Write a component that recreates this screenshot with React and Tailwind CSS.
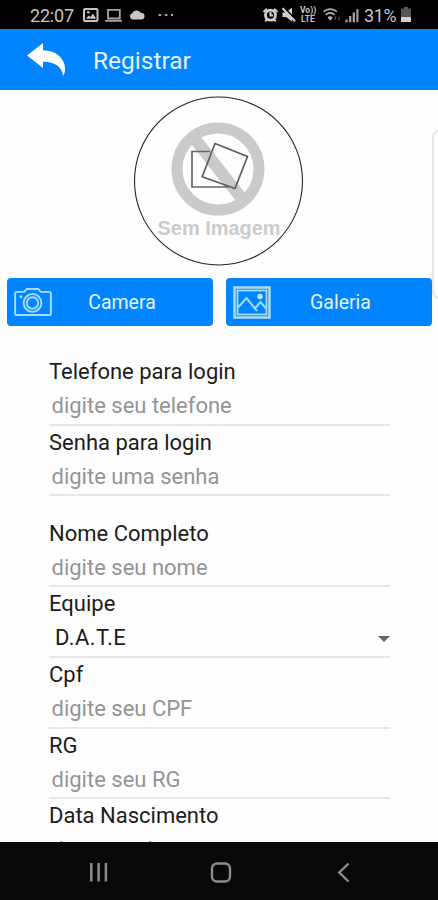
import React, { useState } from "react";

const StatusBar = () => (
  <div className="h-[29px] shrink-0 bg-black text-[#c6c6c6] flex items-center justify-between pl-[30px] pr-[27px]">
    <div className="flex items-center">
      <span className="w-[53px] pt-[2px] text-[18px] leading-none tracking-[-0.2px] whitespace-nowrap">22:07</span>
      {/* picture, laptop, cloud, more */}
      <svg className="w-[90px] h-[18px]" viewBox="83 6 90 18" fill="none">
        <rect x="84" y="9" width="13.5" height="12" rx="1" stroke="#c6c6c6" strokeWidth="2" />
        <path d="M86 18.8l2.5-3.3 2 1.5 2.5-3.5 3 5.3z" fill="#c6c6c6" />
        <circle cx="88.3" cy="12.3" r="1.3" fill="#c6c6c6" />
        <path d="M108 18.5V9.8h11.8v8.7zM105 20.8h17" stroke="#a5a5a5" strokeWidth="1.8" />
        <path d="M132.5 19.5a3.2 3.2 0 0 1-.3-6.2 4.7 4.7 0 0 1 8.4-.6 3.4 3.4 0 0 1 1 6.8z" fill="#c6c6c6" />
        <path d="M158.5 15h2.6M164.8 15h2.6M171 15h2" stroke="#a5a5a5" strokeWidth="2" />
      </svg>
    </div>
    <div className="flex items-center">
      {/* alarm, mute, VoLTE */}
      <svg className="w-[35px] h-[20px]" viewBox="260 5 35 20" fill="none">
        <circle cx="268.5" cy="15.2" r="5" stroke="#d0d0d0" strokeWidth="2.8" />
        <path d="M268.5 12v3.4h2.6M261.5 12l3.4-3.2M275.5 12l-3.4-3.2M265 19.3l-1.8 2M272 19.3l1.8 2" stroke="#d0d0d0" strokeWidth="2" />
        <path d="M280.5 12.5h3.5l6-5v14l-6-4.5h-3.5z" fill="#d0d0d0" />
        <path d="M281.5 7.2l12.5 13" stroke="#000" strokeWidth="2" />
        <path d="M280.5 8.2l12.5 13" stroke="#d0d0d0" strokeWidth="2.2" />
      </svg>
      <div className="w-[26px] pl-[3px] flex flex-col text-[8.5px] leading-[9px] font-bold">
        <span className="h-[9px]">Vo))</span>
        <span className="h-[9px] pl-px">LTE</span>
      </div>
      {/* wifi, signal */}
      <svg className="w-[38px] h-[20px] mr-[3px]" viewBox="321 5 38 20" fill="none">
        <path d="M321.5 11.6c4-3.4 9.4-3.4 13.4 0M323.8 14.8c2.8-2.3 6-2.3 8.8 0" stroke="#b5b5b5" strokeWidth="1.7" />
        <path d="M325.5 17.3c1.8-1.4 3.6-1.4 5.3 0l-2.6 3.5z" fill="#b5b5b5" />
        <path d="M333.5 16v4M337 16.5v4" stroke="#444" strokeWidth="1.5" />
        <path d="M344.6 19.5v2.7M348.2 16v6.2M351.8 12.5v9.7" stroke="#a5a5a5" strokeWidth="2.2" />
        <path d="M355.4 9v13.2" stroke="#999" strokeWidth="2.2" />
      </svg>
      <span className="w-[34px] pt-[2px] text-[18px] leading-none tracking-[-0.4px] whitespace-nowrap">31%</span>
      <svg className="w-[10px] h-[15px] ml-[3px]" viewBox="0 0 10 15">
        <path d="M3 0h4v1.6h3V15H0V1.6h3z" fill="#555" />
        <path d="M0 10h10v5H0z" fill="#d0d0d0" />
      </svg>
    </div>
  </div>
);

const Header = () => (
  <header className="h-[61px] shrink-0 bg-[#0084ff] flex items-center pl-[27px] gap-[27px]">
    <svg className="w-[39px] h-[34px]" viewBox="0 0 39 34" fill="#fff">
      <path d="M0 12.5L16 0v7.2c14 .2 22.8 9.500 22 19.300-.1 2.700-.9 5.100-2 6.500C35.300 24.200 27.700 18.600 16 18.800V25z" />
    </svg>
    <h1 className="pt-[3px] text-[24.5px] leading-none text-[#e6f4ff]">Registrar</h1>
  </header>
);

const NoImage = () => (
  <svg className="w-[172px] h-[172px] mx-auto block" viewBox="132.5 95 172 172" fill="none">
    <circle cx="218" cy="181" r="84" stroke="#222" strokeWidth="1.1" />
    <circle cx="217.5" cy="169" r="41" stroke="#cacaca" strokeWidth="11" />
    <path d="M194 138.5l48 61" stroke="#cacaca" strokeWidth="12" />
    <path d="M209.5 151.5H191.5V187H228" stroke="#666" strokeWidth="1.7" />
    <path d="M214.5 143.5l32.5 13-12.5 32-32.8-11.8z" stroke="#5c5c5c" strokeWidth="1.7" />
    <text x="157" y="234.5" fontSize="20" fontWeight="700" fill="#cbcbcb" textLength="123" lengthAdjust="spacingAndGlyphs" className="font-['Liberation_Sans',sans-serif]">
      Sem Imagem
    </text>
  </svg>
);

const CameraIcon = () => (
  <svg className="w-[38px] h-[29px]" viewBox="0 0 39 30" fill="none" stroke="#a8dcff" strokeWidth="2">
    <path d="M3 4h7.5l2.5-3h12l2.5 3H36a2 2 0 0 1 2 2v20a2 2 0 0 1-2 2H3a2 2 0 0 1-2-2V6a2 2 0 0 1 2-2z" />
    <circle cx="19" cy="15.5" r="9.2" />
    <circle cx="19" cy="15.5" r="5.9" />
    <circle cx="7" cy="9" r="1.5" fill="#b9e4ff" stroke="none" />
  </svg>
);

const GalleryIcon = () => (
  <svg className="w-[38px] h-[33px]" viewBox="0 0 38 33" fill="none" stroke="#a9dcee">
    <rect x="1.5" y="1.5" width="35" height="30" strokeWidth="2.5" />
    <rect x="4.5" y="4.5" width="29" height="24" strokeWidth="1.8" />
    <path d="M5 21.5l8.5-9.500 8.500 10.500 5.500-6.500 6 7M22 22.500l2 2.500" strokeWidth="2" />
    <circle cx="27" cy="10.5" r="2.8" fill="#b9e4f4" stroke="none" />
  </svg>
);

const PhotoButton = ({ icon, label }) => (
  <button className="w-[206px] h-[48px] rounded-[4px] bg-[#0084ff] text-[#e6f4ff] flex items-center pl-[7px]">
    <span className="w-[39px]">{icon}</span>
    <span className="w-[138px] pt-[2px] text-center text-[19.5px] leading-none">{label}</span>
  </button>
);

const Field = ({ label, placeholder, value, onChange }) => (
  <label className="block h-[70.7px] border-b-2 border-[#e7e7e7]">
    <span className="block h-[34px] text-[22px] leading-[34px] text-[#1c1c1c]">{label}</span>
    <input
      className="block w-full h-[34px] pl-[2.5px] text-[22px] leading-[34px] text-[#1c1c1c] placeholder:text-[#949494] outline-none"
      placeholder={placeholder}
      value={value}
      onChange={onChange}
    />
  </label>
);

const SelectField = ({ label, value }) => (
  <div className="h-[70.7px] border-b-2 border-[#e7e7e7]">
    <div className="h-[34px] text-[22px] leading-[34px] text-[#1c1c1c]">{label}</div>
    <div className="h-[34px] pl-[6px] flex items-center justify-between text-[22px] leading-[34px] text-[#1c1c1c]">
      <span className="tracking-[0.4px]">{value}</span>
      <svg className="w-[12px] h-[6px] mt-[2px]" viewBox="0 0 12 6">
        <path d="M0 0h12L6 6z" fill="#666" />
      </svg>
    </div>
  </div>
);

const NavBar = () => (
  <nav className="h-[58px] shrink-0 bg-[#080808]">
    <svg className="w-full h-full" viewBox="0 842 438 58" fill="none" stroke="#8c8c8c">
      <path d="M91.3 863v18.5M98.6 863v18.5M105.9 863v18.5" strokeWidth="2.5" />
      <rect x="212" y="863.5" width="18" height="18" rx="5" strokeWidth="2.4" />
      <path d="M348.5 863.5l-9.2 9 9.2 9" strokeWidth="2.4" />
    </svg>
  </nav>
);

const App = () => {
  const [form, setForm] = useState({ telefone: "", senha: "", nome: "", cpf: "", rg: "", nascimento: "" });

  const bind = (name) => ({
    value: form[name],
    onChange: (e) => setForm({ ...form, [name]: e.target.value }),
  });

  return (
    <div className="relative w-[438px] h-[900px] overflow-hidden flex flex-col bg-[#fefefe] font-[Roboto,sans-serif]">
      <StatusBar />
      <Header />

      <main className="flex-1 min-h-0 overflow-hidden pt-[5px]">
        <NoImage />

        <div className="mt-[11px] pl-[7px] flex gap-[12.5px]">
          <PhotoButton icon={<CameraIcon />} label="Camera" />
          <PhotoButton icon={<GalleryIcon />} label="Galeria" />
        </div>

        <form className="mt-[29px] ml-[49px] w-[341px]">
          <Field label="Telefone para login" placeholder="digite seu telefone" {...bind("telefone")} />
          <Field label="Senha para login" placeholder="digite uma senha" {...bind("senha")} />
          <div className="h-[20.2px]" />
          <Field label="Nome Completo" placeholder="digite seu nome" {...bind("nome")} />
          <SelectField label="Equipe" value="D.A.T.E" />
          <Field label="Cpf" placeholder="digite seu CPF" {...bind("cpf")} />
          <Field label="RG" placeholder="digite seu RG" {...bind("rg")} />
          <Field label="Data Nascimento" placeholder="data nascimento" {...bind("nascimento")} />
        </form>
      </main>

      {/* edge panel handle */}
      <div className="absolute right-[-8px] top-[130px] w-[14px] h-[169px] rounded-[8px] border-2 border-[#e6e6e6]" />

      <NavBar />
    </div>
  );
};

export default App;
